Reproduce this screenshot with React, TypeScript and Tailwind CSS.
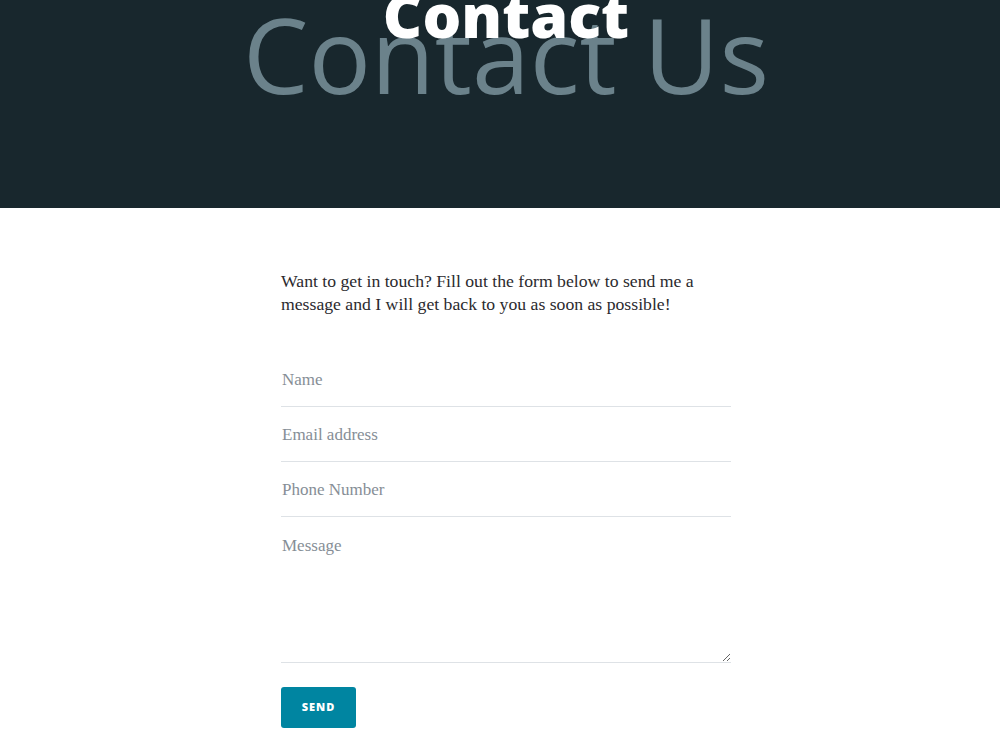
import React from 'react';

const serif = "font-['Liberation_Serif',serif]";
const sans = "font-['Open_Sans',sans-serif]";

function Field({ placeholder, type = 'text' }: { placeholder: string; type?: string }) {
  return (
    <input
      type={type}
      placeholder={placeholder}
      className={`${serif} block w-full h-[55px] border-b border-[#dee2e6] bg-transparent pt-px pb-0 px-px text-[17px] text-[#212529] placeholder:text-[#868e96] outline-none`}
    />
  );
}

export default function App() {
  return (
    <div className="min-h-screen bg-white">
      {/* Page header */}
      <header className="h-[208px] bg-[#18272d] overflow-hidden">
        <div className="relative pl-[12px] flex justify-center">
          <span
            className={`${sans} block mt-[2px] text-[104px] leading-none font-normal text-[#6b828b] tracking-normal`}
          >
            Contact Us
          </span>
          <h1
            className={`${sans} absolute top-[-16px] left-0 right-0 pl-[12px] text-center text-[61px] leading-none font-extrabold text-white`}
          >
            Contact
          </h1>
        </div>
      </header>

      {/* Contact form */}
      <main className="ml-[281px] w-[450px] pt-[62px] pb-10">
        <p className={`${serif} text-[17.7px] leading-[23px] text-[#2b2a2e]`}>
          Want to get in touch? Fill out the form below to send me a message and I will get back to you as soon as
          possible!
        </p>

        <form className="mt-[36px]" onSubmit={(e) => e.preventDefault()}>
          <Field placeholder="Name" />
          <Field placeholder="Email address" type="email" />
          <Field placeholder="Phone Number" type="tel" />
          <textarea
            placeholder="Message"
            className={`${serif} block w-full h-[146px] border-b border-[#dee2e6] bg-transparent pt-[18px] px-px text-[17px] leading-[22px] text-[#212529] placeholder:text-[#868e96] outline-none`}
          />
          <button
            type="submit"
            className={`${sans} mt-[24px] w-[75px] h-[41px] rounded-[3px] bg-[#0085a1] text-[11px] font-extrabold tracking-[1px] text-white`}
          >
            SEND
          </button>
        </form>
      </main>
    </div>
  );
}
